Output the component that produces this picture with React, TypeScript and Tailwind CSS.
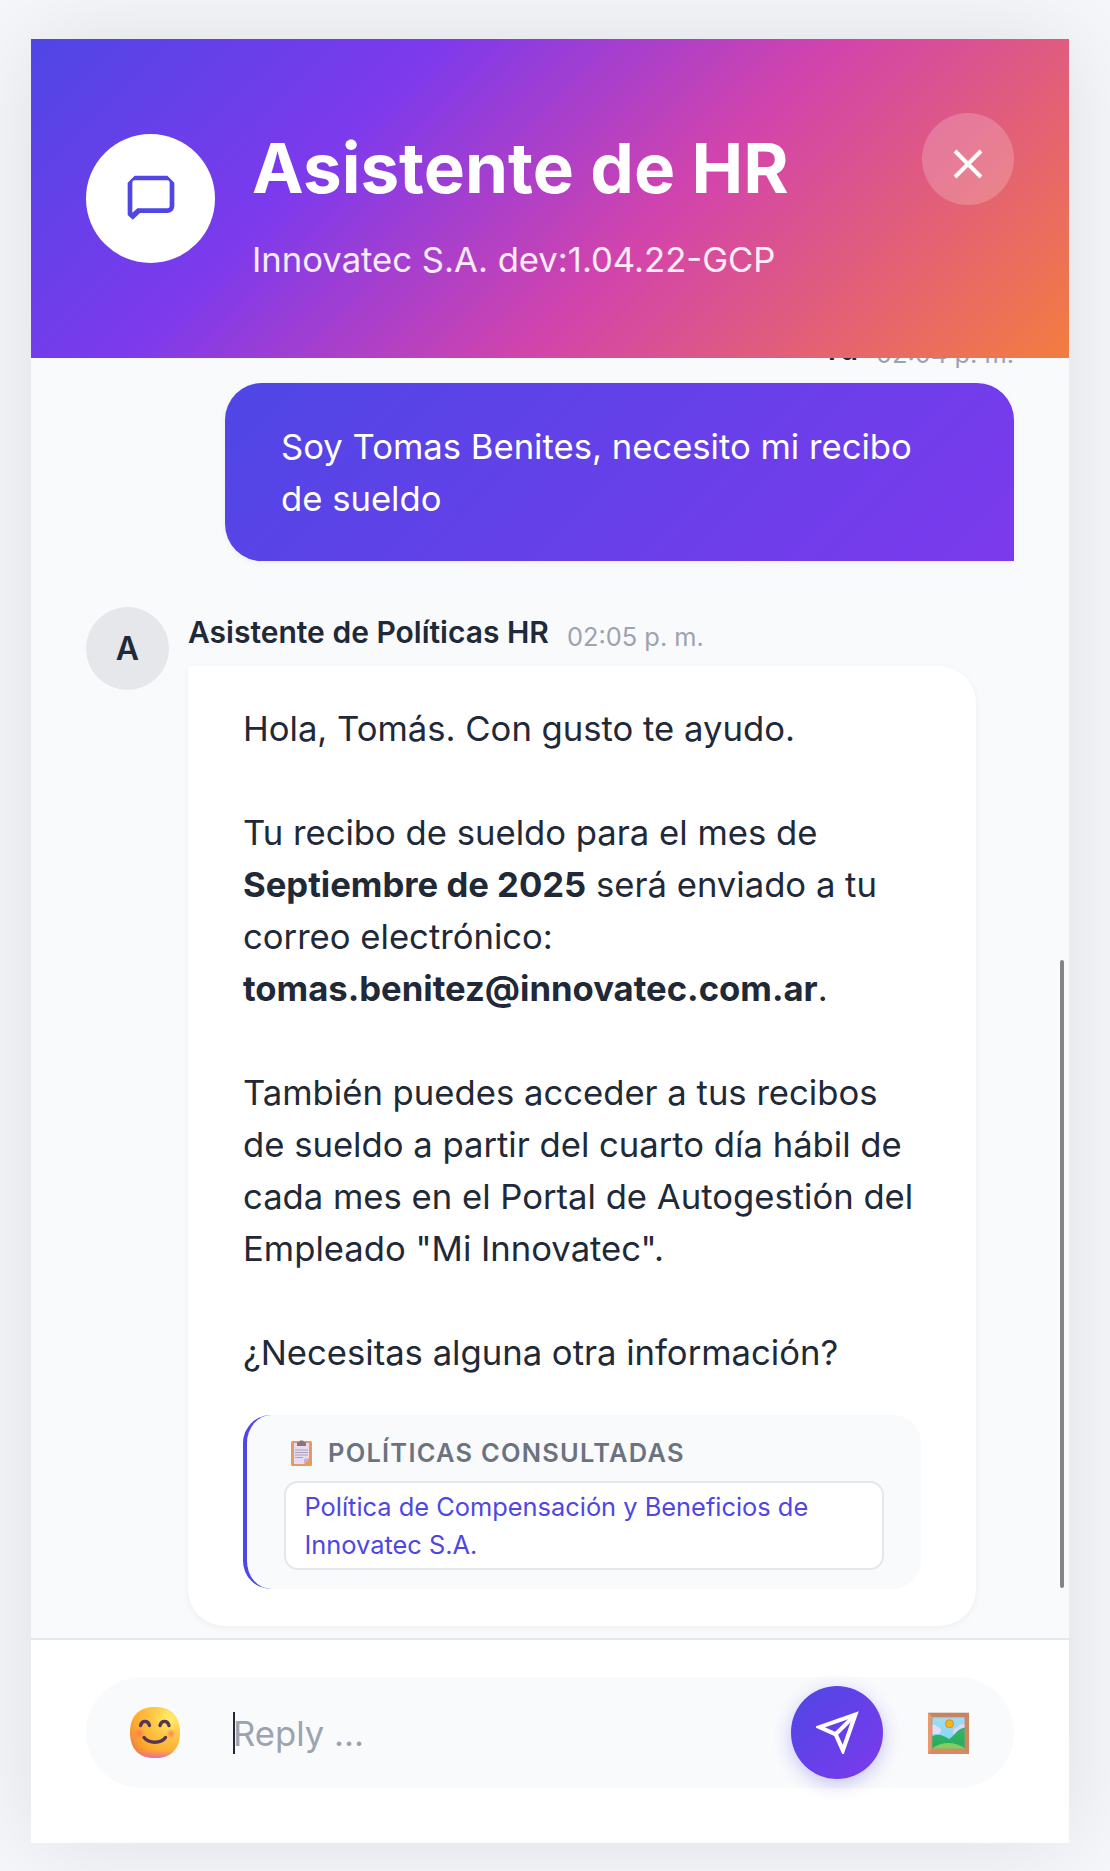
import React from "react";

function ChatIcon() {
  return (
    <svg className="mt-[1px] size-[56px]" viewBox="0 0 24 24" fill="#4f46e5" fillRule="evenodd">
      <path d="M5 2H19L22 5V15a3 3 0 0 1-3 3H7.300L4.200 20.900 2 18.900V5L5 2ZM5 4a1 1 0 0 0-1 1V17.900L6.200 16H19a1 1 0 0 0 1-1V5a1 1 0 0 0-1-1Z" />
    </svg>
  );
}

function SendIcon() {
  return (
    <svg className="size-[43px]" viewBox="0 0 24 24" fill="none" stroke="white" strokeWidth="2.300">
      <path d="M22 2 11 13" />
      <path d="M22 2 15 22 11 13 2 9z" />
    </svg>
  );
}

function SmileEmoji() {
  return (
    <svg className="h-[51px] w-[50px]" viewBox="0 0 50 51">
      <defs>
        <radialGradient id="face" cx="0.8" cy="0.22" r="1">
          <stop offset="0" stopColor="#fff06c" />
          <stop offset="0.35" stopColor="#fec846" />
          <stop offset="0.72" stopColor="#fda92f" />
          <stop offset="0.9" stopColor="#f0883d" />
          <stop offset="1" stopColor="#e0604f" />
        </radialGradient>
        <linearGradient id="chin" x2="0" y2="1">
          <stop offset="0.85" stopColor="#f07a80" stopOpacity="0" />
          <stop offset="1" stopColor="#ef64c0" />
        </linearGradient>
        <radialGradient id="cheek">
          <stop offset="0" stopColor="#fb6a5b" stopOpacity=".8" />
          <stop offset="1" stopColor="#fb7a5b" stopOpacity="0" />
        </radialGradient>
      </defs>
      <path d="M25 0C42 0 50 10 50 25.500S42 51 25 51 0 41 0 25.500 8 0 25 0Z" fill="url(#face)" />
      <path d="M25 0C42 0 50 10 50 25.500S42 51 25 51 0 41 0 25.500 8 0 25 0Z" fill="url(#chin)" />
      <circle cx="9" cy="26.500" r="6.500" fill="url(#cheek)" />
      <circle cx="41" cy="26.500" r="5" fill="url(#cheek)" />
      <g fill="none" stroke="#593554" strokeWidth="3.400" strokeLinecap="round">
        <path d="M10.500 18.500c1.500-5.500 7.500-5.500 9 0M30 18.500c1.500-5.500 7.500-5.500 9 0" />
        <path d="M14 30.500c5 6.300 17 6.300 21.500 0" />
      </g>
    </svg>
  );
}

function PictureEmoji() {
  return (
    <svg className="h-[42px] w-[41px]" viewBox="0 0 41 42">
      <defs>
        <linearGradient id="sky" x2="0" y2="1">
          <stop stopColor="#a0dcef" />
          <stop offset="1" stopColor="#7ed3f8" />
        </linearGradient>
        <linearGradient id="hill" x2="0" y2="1">
          <stop stopColor="#30b866" />
          <stop offset="1" stopColor="#28a85f" />
        </linearGradient>
        <clipPath id="canvas"><path d="M4 5h33v32H4z" /></clipPath>
      </defs>
      <path d="M0 0h41v42H0z" fill="#d98a60" />
      <path d="M0 0h41l-4 5H4z" fill="#c98260" />
      <path d="M41 0v42l-4-5V5z" fill="#cf855e" />
      <path d="M0 0v42l4-5V5z" fill="#e79a70" />
      <path d="M0 0h41v1H0z" fill="#e5d5cf" />
      <g clipPath="url(#canvas)">
        <path d="M4 5h33v32H4z" fill="url(#sky)" />
        <path d="M0 13c5-2 8 0 9 2 5 0 5 6 1 7H0z" fill="#e6dcfa" />
        <path d="M25 20c0-4 4-5 5-5 1-3 5-4 8-2v12H27z" fill="#dfd5f6" />
        <path d="M4 24.500C10 21 15 23.500 21 27c6-3 8-11 17-11.500V38H4z" fill="url(#hill)" />
        <path d="M4 36.500c9-7.500 24-7.500 33 0v2H4z" fill="#86cd61" />
        <circle cx="21.500" cy="11.700" r="4" fill="#f5b31d" stroke="#dd8b2e" />
      </g>
      <path d="M4 5h33v32H4z" fill="none" stroke="#b79079" strokeWidth=".8" />
    </svg>
  );
}

function ClipboardEmoji() {
  return (
    <svg className="h-[26px] w-[21px]" viewBox="0 0 21 26">
      <rect y="1" width="21" height="25" rx="1.500" fill="#e59a64" />
      <path d="M3 3h15v16l-5 5H3z" fill="#e6dcf0" />
      <path d="M18 18v1l-5 5v-5z" fill="#c9b3c4" />
      <path d="M6 6V3q0-1 2-1l1-1.500h3L13 2q2 0 2 1v3z" fill="#8a7480" />
      <path d="M4 10h13M4 12.500h13M4 15h13M4 17.500h8" stroke="#a598b2" strokeWidth=".9" />
    </svg>
  );
}

function Header() {
  return (
    <header className="relative z-10 flex h-[319px] shrink-0 items-center bg-[linear-gradient(135deg,#4f46e5_0%,#7c3aed_30%,#d344ab_60%,#f37d40_100%)] px-[55px]">
      <div className="flex size-[129px] shrink-0 items-center justify-center rounded-full bg-white">
        <ChatIcon />
      </div>
      <div className="ml-[37px] flex-1 pt-[15px]">
        <h1 className="text-[69.200px] leading-[83px] font-bold text-white">Asistente de HR</h1>
        <p className="mt-[23px] text-[34.650px] leading-[52px] text-white/90">Innovatec S.A. dev:1.04.22-GCP</p>
      </div>
      <button aria-label="Cerrar" className="mb-[79px] flex size-[92px] items-center justify-center rounded-full bg-white/20">
        <svg className="mt-[9px] size-[30px]" viewBox="0 0 30 30" stroke="white" strokeWidth="4">
          <path d="M2 2l26 26M28 2l-26 26" />
        </svg>
      </button>
    </header>
  );
}

function Meta({ name, time }: { name: string; time: string }) {
  return (
    <div className="flex h-[48px] items-end gap-[18px] whitespace-nowrap">
      <span className="text-[30px] leading-[45px] font-semibold text-[#1f2937]">{name}</span>
      <span className="text-[25.400px] leading-[36px] text-[#9ca3af]">{time}</span>
    </div>
  );
}

function Messages() {
  return (
    <main className="relative flex h-[1280px] flex-col overflow-hidden bg-[#f9fafc] px-[55px]">
      <div className="-mt-[34px] flex shrink-0 flex-col items-end">
        <Meta name="Tú" time="02:04 p. m." />
        <div className="mt-[11px] h-[178px] w-[789px] rounded-[37px] rounded-br-none bg-[linear-gradient(135deg,#4f46e5,#7c3aed)] px-[56px] py-[37px] text-[34.650px] leading-[52px] whitespace-nowrap text-white shadow-[0_2px_7px_rgba(0,0,0,0.05)]">
          Soy Tomas Benites, necesito mi recibo<br />de sueldo
        </div>
      </div>
      <div className="mt-[46px] flex shrink-0 items-start">
        <div className="flex size-[83px] shrink-0 items-center justify-center rounded-full bg-[#e5e7eb] text-[32px] font-semibold text-[#1f2937]">A</div>
        <div className="ml-[19px]">
          <Meta name="Asistente de Políticas HR" time="02:05 p. m." />
          <div className="mt-[11px] w-[788px] rounded-[37px] rounded-tl-none bg-white p-[37px_55px] text-[34.650px] leading-[51.960px] text-[#1f2937] shadow-[0_2px_7px_rgba(0,0,0,0.05)]">
            <p>Hola, Tomás. Con gusto te ayudo.</p>
            <p className="mt-[52px] whitespace-nowrap">
              Tu recibo de sueldo para el mes de<br />
              <b>Septiembre de 2025</b> será enviado a tu<br />
              correo electrónico:<br />
              <b>tomas.benitez@innovatec.com.ar</b>.
            </p>
            <p className="mt-[52px] whitespace-nowrap">
              También puedes acceder a tus recibos<br />
              de sueldo a partir del cuarto día hábil de<br />
              cada mes en el Portal de Autogestión del<br />
              Empleado "Mi Innovatec".
            </p>
            <p className="mt-[52px]">¿Necesitas alguna otra información?</p>
            <section className="mt-[36.400px] h-[174px] rounded-[28px] border-l-4 border-[#4f46e5] bg-[#f9fafc] px-[37px] pt-[19px]">
              <h2 className="flex h-[38px] items-center pl-[7px] text-[25.400px] font-semibold tracking-[1.270px] text-[#6b7280]">
                <ClipboardEmoji />
                <span className="ml-[16px]">POLÍTICAS CONSULTADAS</span>
              </h2>
              <div className="mt-[9px] h-[89px] w-[600px] rounded-[14px] border-2 border-[#e5e7eb] bg-white px-[18.500px] py-[5px] text-[25.400px] leading-[38px] text-[#4f46e5]">
                Política de Compensación y Beneficios de<br />Innovatec S.A.
              </div>
            </section>
          </div>
        </div>
      </div>
      <div className="absolute top-[602px] right-[5px] h-[628px] w-[4px] rounded-full bg-[#858585]" />
    </main>
  );
}

function Composer() {
  return (
    <footer className="h-[205px] border-t-2 border-[#e5e7eb] bg-white px-[55px] pt-[37px]">
      <div className="flex h-[111px] items-center rounded-full bg-[#f9fafc] pr-[45px] pl-[44px]">
        <SmileEmoji />
        <div className="ml-[53px] flex flex-1 items-center">
          <div className="h-[42px] w-[2px] bg-[#1f2937]" />
          <span className="-ml-[2px] text-[34.650px] leading-[52px] text-[#9ca3af]">Reply ...</span>
        </div>
        <button aria-label="Enviar" className="flex h-[93px] w-[92px] items-center justify-center rounded-full bg-[linear-gradient(135deg,#4f46e5,#7c3aed)] shadow-[0_5px_18px_rgba(79,70,229,0.3)]">
          <SendIcon />
        </button>
        <div className="ml-[45px]"><PictureEmoji /></div>
      </div>
    </footer>
  );
}

export default function App() {
  return (
    <div className="h-[1871px] w-[1110px] overflow-hidden bg-[#f5f7fb] pt-[39px] pl-[31px] font-['Inter',sans-serif]">
      <div className="flex h-[1804px] w-[1038px] flex-col shadow-[0_0_92px_rgba(0,0,0,0.1)]">
        <Header />
        <Messages />
        <Composer />
      </div>
    </div>
  );
}
